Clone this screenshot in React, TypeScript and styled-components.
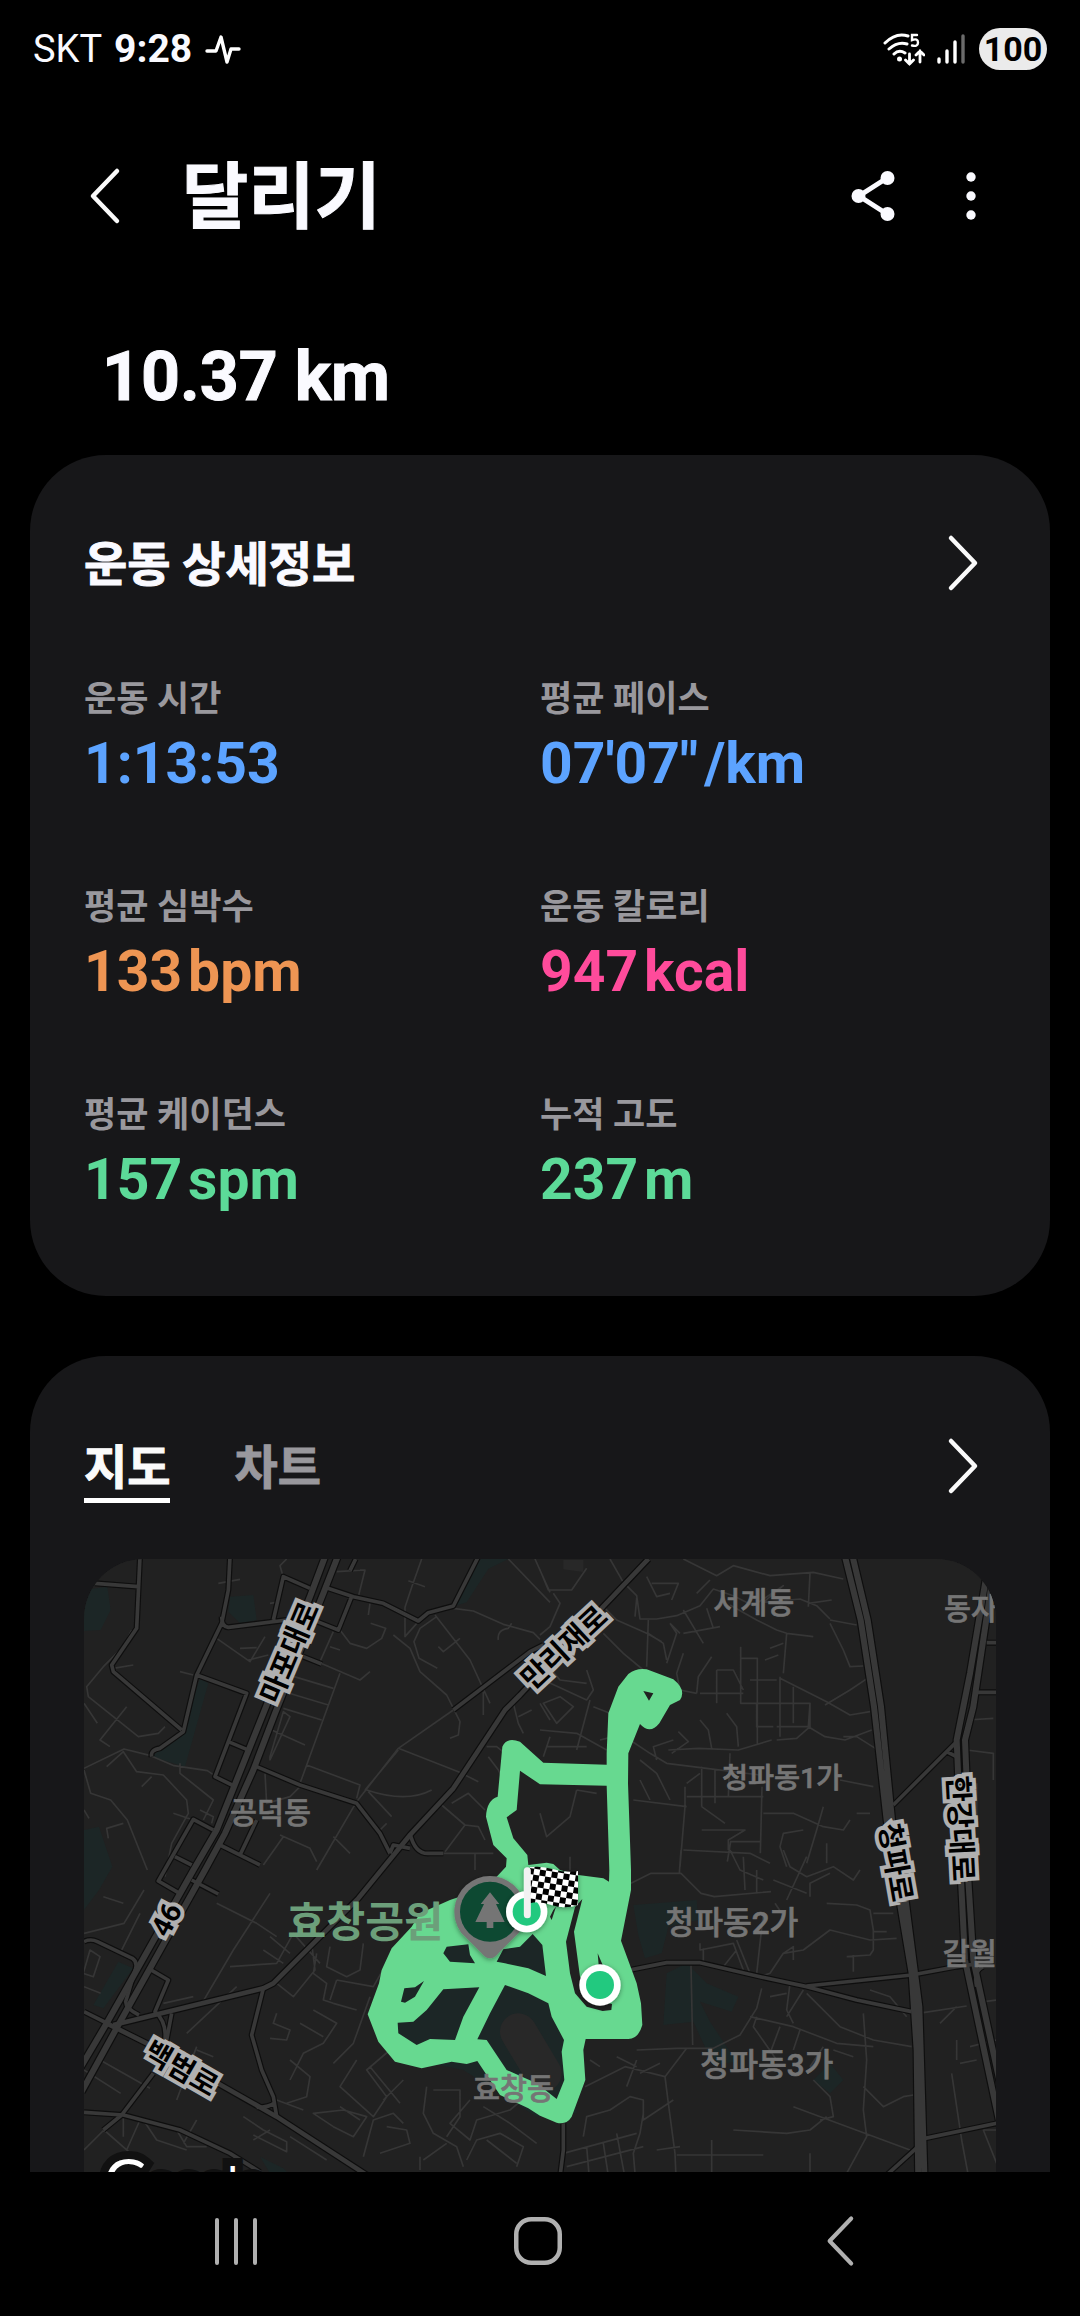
import React, { useState } from "react";
import styled, { createGlobalStyle } from "styled-components";

const GlobalStyle = createGlobalStyle`
  * { box-sizing: border-box; }
  html, body { margin: 0; background: #000; }
  body {
    font-family: Roboto, "Noto Sans CJK KR", sans-serif;
    color: #fafaff;
  }
  button {
    margin: 0;
    padding: 0;
    border: 0;
    background: none;
    color: inherit;
    font: inherit;
    cursor: pointer;
  }
  h1, h2, p, dl, dt, dd { margin: 0; }
`;

const Screen = styled.div`
  display: flex;
  flex-direction: column;
  height: 100vh;
  overflow: hidden;
`;

const StatusBar = styled.div`
  display: flex;
  flex: none;
  align-items: center;
  justify-content: space-between;
  height: 98px;
  padding: 0 33px;
`;

const StatusGroup = styled.div`
  display: flex;
  align-items: center;
  gap: 12px;
`;

const Carrier = styled.span`
  font-size: 38px;
  font-weight: 400;
  line-height: 44px;
`;

const Clock = styled.span`
  font-size: 39px;
  font-weight: 700;
  line-height: 44px;
`;

const Battery = styled.span`
  height: 42px;
  width: 68px;
  border-radius: 21px;
  background: #ebebeb;
  color: #000;
  font-size: 34px;
  font-weight: 700;
  line-height: 42px;
  text-align: center;
`;

const AppBar = styled.header`
  display: flex;
  flex: none;
  align-items: center;
  height: 196px;
  padding: 0 73px 0 69px;
`;

const IconButton = styled.button<{ $width?: number }>`
  display: flex;
  flex: none;
  align-items: center;
  justify-content: center;
  width: ${(p) => p.$width ?? 72}px;
  height: 72px;
`;

const Title = styled.h1`
  flex: 1;
  padding: 3px 0 0 41px;
  font-size: 72px;
  font-weight: 700;
  line-height: 96px;
  -webkit-text-stroke: 1px currentColor;
`;

const Actions = styled.div`
  display: flex;
  gap: 26px;
`;

const Content = styled.main`
  flex: 1;
  min-height: 0;
  overflow: hidden;
  padding: 0 30px;
`;

const Distance = styled.p`
  padding: 5px 72px 0;
  font-size: 68px;
  font-weight: 700;
  line-height: 156px;
  -webkit-text-stroke: 1px currentColor;
`;

const Card = styled.section`
  margin-bottom: 60px;
  padding: 0 54px 81px;
  border-radius: 76px;
  background: #171719;
`;

const CardHeader = styled.div<{ $height: number; $top?: number }>`
  display: flex;
  align-items: center;
  justify-content: space-between;
  height: ${(p) => p.$height}px;
  padding-top: ${(p) => p.$top ?? 0}px;
`;

const CardTitle = styled.h2`
  padding-top: 3px;
  font-size: 47px;
  font-weight: 700;
  line-height: 64px;
  -webkit-text-stroke: 1px currentColor;
`;

const Stats = styled.dl`
  display: grid;
  grid-template-columns: 1fr 1fr;
  row-gap: 80px;
`;

const StatLabel = styled.dt`
  color: #99989d;
  font-size: 35px;
  font-weight: 700;
  line-height: 58px;
`;

const StatValue = styled.dd<{ $color: string }>`
  display: flex;
  gap: 6px;
  color: ${(p) => p.$color};
  font-size: 57px;
  font-weight: 700;
  line-height: 70px;
`;

const Tabs = styled.div`
  display: flex;
  gap: 64px;
`;

const Tab = styled.button<{ $active: boolean }>`
  padding-top: 3px;
  border-top: 5px solid transparent;
  border-bottom: 5px solid ${(p) => (p.$active ? "#fff" : "transparent")};
  color: ${(p) => (p.$active ? "#fafafa" : "#99989d")};
  font-size: 47px;
  font-weight: 700;
  line-height: 61px;
  -webkit-text-stroke: 1px currentColor;
`;

const MapFrame = styled.div`
  position: relative;
  overflow: hidden;
  aspect-ratio: 4 / 3;
  border-radius: 60px;
  background: #212121;
`;

const MapDrawing = styled.svg`
  display: block;
  width: 100%;
  height: 100%;
`;

const Attribution = styled.span`
  position: absolute;
  top: 588px;
  left: 20px;
  color: #fff;
  font-family: Lato, sans-serif;
  font-size: 48px;
  line-height: 64px;
  -webkit-text-stroke: 16px #111;
  paint-order: stroke fill;

  &::first-letter { font-size: 60px; }
`;

const NavBar = styled.nav`
  display: flex;
  flex: none;
  align-items: center;
  justify-content: space-around;
  height: 144px;
  padding: 0 88px 6px 85px;
  background: #000;
`;

const Chevron = ({ left = false, color = "#fafafa", size = 60 }) => (
  <svg width={(size * 32) / 60} height={size} viewBox="0 0 32 60" fill="none" stroke={color} strokeWidth="4.500" strokeLinecap="round" strokeLinejoin="round">
    <path d={left ? "M28 5L4 30l24 25" : "M4 5l24 25L4 55"} />
  </svg>
);

const PulseIcon = () => (
  <svg width="38" height="32" viewBox="0 0 38 32" fill="none" stroke="#fff" strokeWidth="3.400" strokeLinecap="round" strokeLinejoin="round">
    <path d="M3 18h9l5-14 6 25 4-13h8" />
  </svg>
);

const WifiIcon = () => (
  <svg width="42" height="34" viewBox="0 0 42 34" fill="none" stroke="#fff" strokeWidth="3" strokeLinecap="round">
    <path d="M2 11Q13 0 25 4M6 17q9-8 18-5M11 22q5-5 11-1" />
    <circle cx="16.500" cy="27" r="2.500" fill="#fff" stroke="none" />
    <path d="M34 3h-5v5q6-2 6 2.500t-6 3" strokeWidth="2.400" />
    <path d="M26.500 22v10m-4-4l4 4 4-4M37 30V19m-4 4l4-4 4 4" strokeWidth="2.800" />
  </svg>
);

const SignalIcon = () => (
  <svg width="30" height="32" viewBox="0 0 30 32" stroke="#fff" strokeWidth="3.400" strokeLinecap="round">
    <path d="M2 26v3M10 18v11M18 9v20" />
    <path d="M26 3v26" stroke="#6b6b6b" />
  </svg>
);

const ShareIcon = () => (
  <svg width="48" height="56" viewBox="0 0 48 56" fill="#fafaff" stroke="#fafaff" strokeWidth="5">
    <path d="M38 10L10 28l28 18" fill="none" />
    <g stroke="none">
      <circle cx="38.500" cy="10" r="7" />
      <circle cx="9.500" cy="28" r="7" />
      <circle cx="38.500" cy="46" r="7" />
    </g>
  </svg>
);

const MoreIcon = () => (
  <svg width="12" height="56" viewBox="0 0 12 56" fill="#fafaff">
    <circle cx="6" cy="9" r="4.700" />
    <circle cx="6" cy="28" r="4.700" />
    <circle cx="6" cy="47" r="4.700" />
  </svg>
);

const RecentsIcon = () => (
  <svg width="44" height="50" viewBox="0 0 44 50" stroke="#b0b0b0" strokeWidth="4" strokeLinecap="round">
    <path d="M3 4v43M22 4v43M41 4v43" />
  </svg>
);

const HomeIcon = () => (
  <svg width="50" height="50" viewBox="0 0 50 50" fill="none" stroke="#b0b0b0" strokeWidth="4.500">
    <rect x="3.250" y="3.250" width="43.500" height="43.500" rx="15" />
  </svg>
);

/* Map geometry: four tiles share one drawing space, 3 units to a pixel. */

const PARKS = [
  "M42 150l70-10 10 70-30 60-50 3z M480 170l70-5 10 75-50 10-35-35z",
  "M390 415l25 15-70 250-100-30 90-75z",
  "M1225 57h90l-60 30-65 100-45 15z",
  "M42 870l45-10 40 120-40 70-45 60z",
  "M145 1265l45 20-90 120-30-10z",
  "M570 1850l70 35 20 20-60-5z",
  "M1690 1095l190-15 5 60-90 20-20 80-50 15-20-70z",
  "M1790 1300l60-30 60 60 95 40-20 45-95-30 30 60 80 120-70 10-60-130-90 10z",
  "M2230 1620l50-50 40 50-40 40z",
  "M930 1300l180-120 300-20 90 300 20 260-120 10-220-140-200-40z",
];

const MINOR = [
  "M650 57l-20 20 10 35M600 190l30-5M445 130l65-12M800 95l85-5-20 80M885 90l-15 0M1055 57l-30 85-20 60v90M1015 122l50 18M900 190l-5 35M1315 57l125 130M1395 57l45 100",
  "M1150 205l60 8 90 40 90 25 20 20M1095 225l105 135 60 130M1100 230l-50 35-18 40 15 50 55 30M1005 290l40-45M1105 320l15 15 50-40M1285 300q-5-30 30-35l10-15M970 285l50 40 30 70 80 70 40 80-5 40-25 10M1240 455v70",
  "M810 270l30 40 50 15 45-30 12-30-45-15M790 275l-40 90M780 320l30 10M730 360l140 60 30-25M810 400l-120 330M640 400l150 45M625 450l150 45M640 505l115 35M605 570l100 45M600 660l60-130-20-15-40 135z",
  "M440 295l100 70 45-75M510 325l50-2M535 360l60-15M330 395l40 10M185 270l-25 50-60 60-50 60 5 30 150 120 60-10 20-20M130 385l60-10M42 490l40 60M170 500l-80 100 30 20",
  "M42 685l120-58 80 20 70 30 100 15 30 20M110 680l50-45 40 60 80 10 70 75 5 40-50 90-20 100M215 740l30-30M42 690l20 70 60 20 50 60 60 150M115 895l-5-30 50-15M42 810l15 25",
  "M330 670v30l100 80-30 60M310 820l60 20M390 810l40 20-5 20M585 700l5 90 70-20 30-30M710 675l160 60-10 40M890 750q120 40 195 0M895 755l70 75M985 625l180 70 60 30M1150 510l-165 115-125 160-120 205M985 630l-100 120",
  "M1115 795l70 60 40 5 20 40M1145 790l50-30 50 50M1185 855l-60 80M1215 940v50M1120 940h150M1250 620l30 0 25 20M1255 650l30 40 10 20M1330 490l15 60 15 30M1345 530l40-20M1410 490l30 50M790 890l50 50M930 870l20-20M640 890l-60 85M630 885l90 40 20 40",
  "M1410 90l25 60h70l45-65M1450 160l20 30-30 70-30 25M1600 200l40 40 90 40 45 25M1620 57l40 70 40 40 10 70 50 0 60-10 70-30 40-50 60 20 60 30 90-60-60 50 110-10 50 20 40 40",
  "M1700 175l-5 55M1730 110l30 60 40-10M1745 130l80 0-20 50M1840 57l100 50 50-30 110 30 130-10 90 20M1880 160l40-40M1600 280l60 60 60 50M1735 240l-5 140M1735 280l45 30 10 50M1800 250l20 30-30 90M1800 250l30 30M1840 210l60 100M1910 205l20 60M1840 280l110-20M1980 195l80 45 60 30 30 10 80 10",
  "M2150 280l-10 120M2100 325l40-15M2085 360l40-15M2130 415l140 70 70 40 60-10M2130 410v180M2220 100l-5 100M2215 190l70-10M2280 240l80 15M2280 250l40 80 20 50 40-2M2400 410l-60 40-75 45",
  "M2012 320v170h100M2012 355h50v260M1890 460h130M1940 390h50l30 60M1940 390v100M2040 420h80M2110 490h110v70h-100M2060 490v70h50M2170 440v110M2220 490l-5 70 50 30 60 10 80-30M2120 600l60-5 40-35M1795 630l90-5 120 5 100-30M1840 340l-20 60 10 50 50 10M1880 460l5-50 40-60",
  "M1970 520l30 40 5 60M1890 540l25 30 10 55M1825 575l30 30-50 35M1760 660l-10-40 60-20M1680 600l60 40 50 30 120 15 160 20M1980 640l-5 130M1895 680v120M1935 690v100M1890 700l-40 30M1850 770h230M1845 740v60l-15 180M2076 740l-5 200M1895 800l70 50M1690 780l160 20M1710 720l30 60M1710 660l50 40 40 80",
  "M1895 870h130l-50 30v30M2080 820h90l90 40 60 10 20-30M2200 870l-60 10-10 40 20 60M2260 800l-20 70-30 100M2270 910v60M2400 820l-40 0M1980 905h90M1982 905l-10 60M1840 930l200 10 60 30M2410 740l-100-20M2440 640l-80-50-40 0M2690 540l80-5M2690 630l80 10v80M2720 730v120",
  "M1590 600l40-10M1410 350l60 70 80 10M1420 420l130 60 20-30-20-60M1420 490l40 60 50-50-40-30zM1410 570l110 10 90 50M1430 620h120M1440 590l-20 60M1410 690l200 40M1410 820l20 70 70-60 20-80M1520 750l60 10M1560 480l-40 150M1570 500l50 20M1500 950v40",
  "M42 1180l120-30 60 -100M100 1070l60 20M60 1230l30 20-20 60-30-10zM42 1340l50 20M150 1240l60-120M480 1280l140 -10 50-90 80 90M440 1090l120 60 60 40M280 1390l90-20M390 1400l100-170 110-170M350 1480l150-140M600 1190l60 50M580 1230l60 40M620 1330l50 40 65-80-10-80M740 1240l-10 60 40 30-10 50 30 10",
  "M780 1220l-10 60 60 30 40-20 10-80M800 1320l-20 60M800 1320l110 20 40-70M900 1370l-50 140-60 60M790 1390l70 20M620 1420l-10 30 50 20-10 30-50-5M730 1410l70 40-40 60-60 30-40 80M690 1450l70 40M660 1560l60 50-10 60-60 20M620 1680l80 30M380 1530l50 20M380 1520l-60 160M90 1560l150 85M42 1590l110 70",
  "M160 1720v70M210 1740l-40 90M220 1740l40 60 90 30M320 1770l30 50h60M380 1740l-40 70M520 1730l60 40 70 35 0 30-100-50M660 1790l110 70M600 1770l-50 30M730 1720l60 40 60 30 40-60-70-20zM860 1560l-50 80 100 90 40-60-60-80 70-60M810 1700l60 40M880 1850l30-110 60-20 30 30M1000 1620l-60 60M900 1580l90 110",
  "M1070 1640l-10 80 30 60 70 40 20 60M1090 1650h80v80l-40 60M1200 1680l-60 70 60 50 20-60 100-30 60-50M950 1760l60 10 10 40-90 30M1190 1860l30-60 70-20 70 40-20 60M1240 1700l80 50 80 60M1250 1800l90 70M1050 1850v40M1130 1810l-70 50M42 1830l60-60 80 70-40 50",
  "M1683 1030l60-30 90 0 60 60 40 10 170-15M1833 930l-5 70M2060 990v70M2025 1050l-5-100M1980 930l30 60 70 30M2110 1020l100 40M2135 1120l-20-30M2210 950l-60 130M2140 930l20 50 50 30 80-30 60 40 20-30M2220 1070v-40l60-30M2270 1090l90 5 40 15 10 60v60l-10 15-70 5M2410 1120h60M2410 1175h40",
  "M1890 1210v20l100-20 30 80M1900 1225v40M2000 1200l40 100M2000 1230l-40 50M2080 1120l-20 180M2070 1310l30-10 40-60 60-10 80-60 120 30 80-5M2140 1240l30-20v40M2350 1245l0 50M1863 1275l5 240M1700 1530l120-5 110 0 80-40 50-80 15-60M2040 1430l130 30 130 50 110 10",
  "M2160 1330l-10 80 20 40M2200 1350l-50 80M2210 1360l40 40 60 60 100 40 115 20M2100 1370l50-10M2130 1460l-30 80M2060 1430l-10 30 70 100M2190 1470l-20 60M2380 1420l10 140-10 150 10 80-60 110-40 70M2560 1418l130-20M2700 1390l80-10M2260 1520l-40 60M2290 1530l60 20M2400 1350l60 20 50 60",
  "M1850 1525l-65 85 10 80 20 150 5 120M1785 1610l-120-30-120 60M1640 1550l60 30M1700 1560l-30 80M1770 1570l-60 30M1560 1560l30 20M1540 1790l10-60 70-20 60-40 40 10v60l90-60M1720 1720l-10 60-20 60 10 120M1480 1840l220-60M1490 1880l230-60M1550 1820l10 120M1600 1810l20 130M1640 1780l30 160M1760 1830l70-10",
  "M1820 1845h260M1925 1800v150M2220 1840v120M1990 1770l160 10 70-10 50-40M2170 1700l350 130M2230 1620l50 50 10 60-40 10M2380 1640l60 60 60-30 30-5M2660 1400l-50 50M2660 1500v60M2645 1600l30 200 30 160M2720 1560l-50 10M2700 1520l80-20M2810 1770l-70 0 40 100",
];

const MAJOR = [
  "M210 50l-10 215-75 110 5 20 205 175M75 130l130 10M480 50l-5 100-20 100-75 155-40 170-70 50q-30 5-25 25M455 230q0 30 20 32l175-22M610 240l30-130 80 35M760 140l90 30 90 20 105 53 30-25 75-20 75-148M857 57l-17 35M845 170l-40 100-70-28",
  "M380 405l150 55-95 250 57 28M475 605l55 23M700 350l55 22M560 680l130 55 170 55 70 90 30 60M1150 510l230-175 40-20M960 940l10-25 50 10M1020 880q15 65 60 60h40",
  "M430 870l-60-32-105 185 60 35M315 950l50 25M450 915l120 60M510 945l50-105M365 1020l80 42",
  "M42 1205q20-10 40 0l105 50q15 10 10 30l-30 100q0 20 40 40M235 1285l60 35-40 95q35 30 30 85M305 1420l-15 80M42 1415l80 40M580 1345l-35 140 30 105 35 80 10 60M560 1702q40 0 55-15M250 1600l-95 125-55 45M42 1717l118 8 170 45 150 70 90 56",
  "M1600 200l-10 10 145-153M1670 1292l120-24h100l180 42 140 30 150 40 165 35M2210 1338l315-33 135-25 110-15M2740 1280q-30 10-20 60M2655 610l-185 185M2750 308h30M2720 457h60M2630 635l35 18",
  "M2565 1795l215-45M2555 1810l-105 95M1480 1750v80l-10 80",
];

const ARTERIAL = [
  "M765 50l-45 120-140 350-60 150-80 200-70 120-260 460-80 135M803 50l-43 110-145 360-65 170-85 190-60 110-260 465-110 200",
  "M2325 50l47 190 40 260 38 340 40 250 35 210 15 230 5 400M2348 50l45 190 40 260 33 340 42 250 40 310 15 500M2747 120l-47 280-40 200 5 120 8 300 12 240 110 520M2765 130l-55 370-25 100 5 120 5 300 15 240 80 370",
];

const AVENUE = "M1735 57l-145 153-240 255-45 45-155 235-130 140-155 190-255 255-30 15-450 110M110 1450l140 70 370 210 270 175";

const ROUTE =
  "M1610 640L1615 520 1645 440 1675 402Q1700 383 1730 388L1810 418Q1850 450 1830 480L1800 495 1768 550Q1740 585 1710 552L1675 640 1674 730 1683 990V1050L1653 1202 1700 1330 1713 1390 1717 1455Q1705 1497 1675 1497H1547L1540 1530 1546 1620 1505 1730Q1490 1755 1460 1748L1410 1727 1375 1705 1290 1665 1222 1563 1190 1572 1145 1565 1055 1585 975 1565 925 1505 893 1423 927 1330 935 1290 965 1225 1025 1160 1050 1120 1140 1080 1200 1060 1280 1010 1308 980 1310 955 1270 915 1248 830Q1250 780 1283 770L1297 620Q1310 590 1350 605L1420 668 1610 674Z" +
  "M1610 737L1410 733 1350 692 1340 810 1310 832 1330 895 1372 945 1375 975 1430 968 1450 972 1470 990 1525 1005 1600 1015 1617 1025 1618 990Z" +
  "M1720 453L1750 460 1737 482Z" +
  "M1120 1240L1130 1220 1195 1213 1200 1245 1215 1270 1140 1265Z" +
  "M1300 1228L1350 1220 1388 1182 1417 1215 1428 1308 1375 1285 1305 1270 1280 1265Z" +
  "M1003 1345L1035 1342 1062 1323 1035 1370 1005 1388 993 1385Z" +
  "M1120 1348L1228 1342 1180 1430 1155 1500 1080 1497 1040 1515 985 1480 983 1448 1030 1445 1070 1410Z" +
  "M1305 1335L1375 1360 1435 1390 1445 1430 1482 1500 1475 1535 1483 1620 1460 1677 1400 1630 1310 1590 1250 1500 1222 1498 1260 1420Z" +
  "M1515 1102L1537 1077 1512 1175 1530 1310 1570 1380 1626 1392 1624 1410 1598 1413 1550 1400 1515 1360 1500 1300 1488 1205Z" +
  "M1583 1240L1598 1275H1586Z M1450 1110L1458 1100 1445 1140 1440 1130Z";

const PLACES = [
  { text: "공덕동", x: 480, y: 850, size: 88 },
  { text: "서계동", x: 1930, y: 220, size: 88 },
  { text: "동자", x: 2622, y: 236, size: 88 },
  { text: "청파동1가", x: 1956, y: 744, size: 85 },
  { text: "청파동2가", x: 1786, y: 1181, size: 94 },
  { text: "청파동3가", x: 1891, y: 1608, size: 94 },
  { text: "갈월", x: 2618, y: 1271, size: 88 },
  { text: "효창동", x: 1209, y: 1676, size: 88 },
];

const ROADS = [
  { text: "마포대로", x: 658, y: 337, angle: -67 },
  { text: "만리재로", x: 1482, y: 322, angle: -43 },
  { text: "46", x: 288, y: 1138, angle: -62 },
  { text: "백범로", x: 334, y: 1585, angle: 30 },
  { text: "청파로", x: 2478, y: 967, angle: 80 },
  { text: "한강대로", x: 2672, y: 865, angle: 87 },
];

const RouteMap = () => (
  <MapDrawing viewBox="42 57 2736 2052" preserveAspectRatio="xMidYMin slice" role="img" aria-label="달리기 경로 지도">
    <defs>
      <pattern id="checker" width="36" height="36" patternUnits="userSpaceOnUse" patternTransform="rotate(9)">
        <rect width="36" height="36" fill="#fff" />
        <path d="M0 0h18v18H0zM18 18h18v18H18z" fill="#000" />
      </pattern>
      <filter id="lift" x="-30%" y="-30%" width="160%" height="160%">
        <feDropShadow dx="0" dy="4" stdDeviation="8" floodOpacity="0.4" />
      </filter>
    </defs>

    <rect x="42" y="57" width="2736" height="2052" fill="#212121" />
    <path d={PARKS.join("")} fill="#1c2626" />
    <path d="M1480 60h60v36l-60-8z" fill="#282828" />
    <path d="M1345 1475L1420 1600" stroke="#282828" strokeWidth="110" strokeLinecap="round" />

    <g fill="none" strokeLinejoin="round">
      <path d={MINOR.join("")} stroke="#363636" strokeWidth="5" />
      <path d={MAJOR.join("")} stroke="#0e0e0e" strokeWidth="18" />
      <path d={AVENUE} stroke="#0e0e0e" strokeWidth="21" />
      <path d={ARTERIAL.join("")} stroke="#0e0e0e" strokeWidth="25" />
      <path d={MAJOR.join("")} stroke="#383838" strokeWidth="11" />
      <path d={AVENUE} stroke="#383838" strokeWidth="14" />
      <path d={ARTERIAL.join("")} stroke="#383838" strokeWidth="18" />
    </g>

    <path d={ROUTE} fill="#67d990" fillRule="evenodd" />

    <g fill="#757575" stroke="#757575" strokeWidth="2" fontWeight="500">
      {PLACES.map((p) => (
        <text key={p.text} x={p.x} y={p.y} fontSize={p.size}>{p.text}</text>
      ))}
    </g>
    <text x="652" y="1190" fontSize="127" fontWeight="700" fill="#6c9f7a">효창공원</text>

    <g fontSize="86" fontWeight="700" textAnchor="middle" fill="#000" stroke="#b0b0b0" strokeWidth="24" paintOrder="stroke">
      {ROADS.map((r) => (
        <text key={r.text} transform={`translate(${r.x} ${r.y}) rotate(${r.angle})`} y="31">{r.text}</text>
      ))}
    </g>

    <g filter="url(#lift)">
      <path d="M1260 1255q-14 0-26-16l-30-30q-12-12-30-30A107 107 0 1 1 1346 1179q-18 18-30 30l-30 30q-12 16-26 16z" fill="#757575" />
      <circle cx="1260" cy="1115" r="90" fill="#0a4a33" />
      <path d="M1260 1057l28 35h-10l26 54h-34v18h-20v-18h-34l26-54h-10z" fill="#757575" />
    </g>

    <g filter="url(#lift)">
      <circle cx="1370" cy="1115" r="62" fill="#fff" />
      <circle cx="1370" cy="1115" r="42" fill="#22c97f" />
      <path d="M1380 982q30-6 70 6t74 5v102q-40 14-80 0t-64-5z" fill="url(#checker)" />
      <path d="M1372 992v132" stroke="#f2f2f2" strokeWidth="21" strokeLinecap="round" />
    </g>

    <g filter="url(#lift)">
      <circle cx="1590" cy="1335" r="62" fill="#fff" />
      <circle cx="1590" cy="1335" r="42" fill="#22c97f" />
    </g>
  </MapDrawing>
);

const STATS = [
  { label: "운동 시간", value: "1:13:53", unit: "", color: "#5ca3ff" },
  { label: "평균 페이스", value: "07'07\"", unit: "/km", color: "#5ca3ff" },
  { label: "평균 심박수", value: "133", unit: "bpm", color: "#ee9553" },
  { label: "운동 칼로리", value: "947", unit: "kcal", color: "#ff4b9b" },
  { label: "평균 케이던스", value: "157", unit: "spm", color: "#5cda98" },
  { label: "누적 고도", value: "237", unit: "m", color: "#5cda98" },
];

const TABS = ["지도", "차트"];

export default function App() {
  const [tab, setTab] = useState(TABS[0]);

  return (
    <Screen>
      <GlobalStyle />
      <StatusBar>
        <StatusGroup>
          <Carrier>SKT</Carrier>
          <Clock>9:28</Clock>
          <PulseIcon />
        </StatusGroup>
        <StatusGroup>
          <WifiIcon />
          <SignalIcon />
          <Battery>100</Battery>
        </StatusGroup>
      </StatusBar>

      <AppBar>
        <IconButton aria-label="뒤로"><Chevron left /></IconButton>
        <Title>달리기</Title>
        <Actions>
          <IconButton aria-label="공유"><ShareIcon /></IconButton>
          <IconButton aria-label="더보기"><MoreIcon /></IconButton>
        </Actions>
      </AppBar>

      <Content>
        <Distance>10.37 km</Distance>

        <Card>
          <CardHeader $height={216}>
            <CardTitle>운동 상세정보</CardTitle>
            <IconButton $width={66} aria-label="운동 상세정보 보기"><Chevron /></IconButton>
          </CardHeader>
          <Stats>
            {STATS.map((s) => (
              <div key={s.label}>
                <StatLabel>{s.label}</StatLabel>
                <StatValue $color={s.color}>
                  <span>{s.value}</span>
                  {s.unit && <span>{s.unit}</span>}
                </StatValue>
              </div>
            ))}
          </Stats>
        </Card>

        <Card>
          <CardHeader $height={203} $top={17}>
            <Tabs role="tablist">
              {TABS.map((name) => (
                <Tab key={name} role="tab" aria-selected={tab === name} $active={tab === name} onClick={() => setTab(name)}>
                  {name}
                </Tab>
              ))}
            </Tabs>
            <IconButton $width={66} aria-label="지도 보기"><Chevron /></IconButton>
          </CardHeader>
          <MapFrame>
            <RouteMap />
            <Attribution>Google</Attribution>
          </MapFrame>
        </Card>
      </Content>

      <NavBar>
        <IconButton aria-label="최근 앱"><RecentsIcon /></IconButton>
        <IconButton aria-label="홈"><HomeIcon /></IconButton>
        <IconButton aria-label="이전"><Chevron left size={54} color="#b0b0b0" /></IconButton>
      </NavBar>
    </Screen>
  );
}
